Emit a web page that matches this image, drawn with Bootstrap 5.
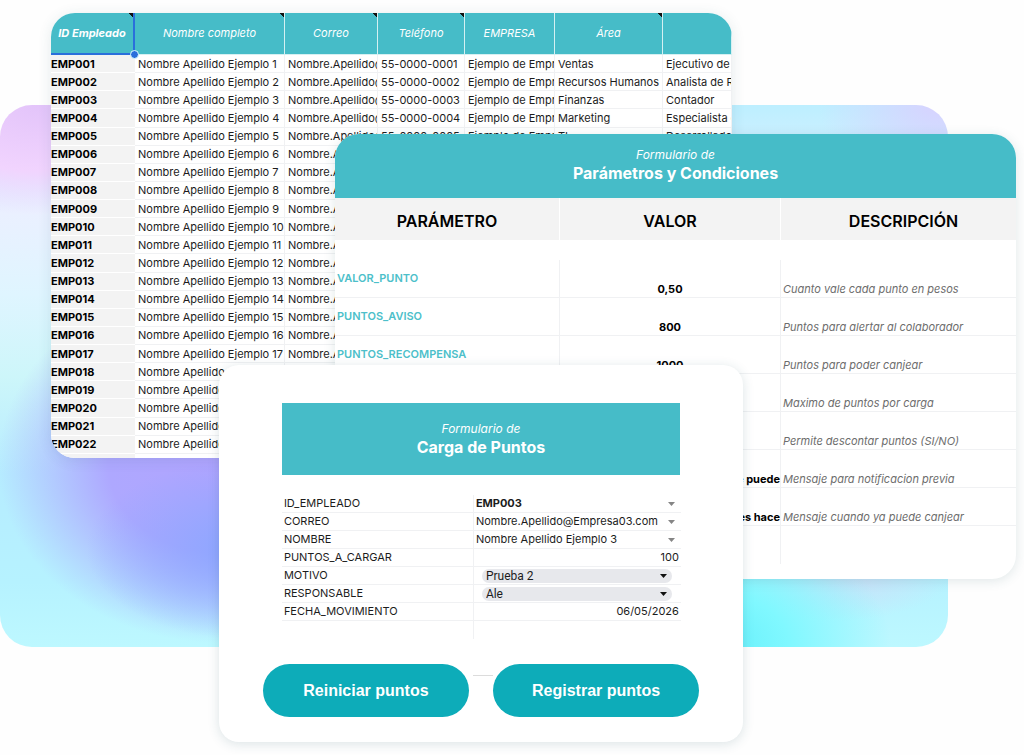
<!DOCTYPE html>
<html lang="es">
<head>
<meta charset="utf-8">
<meta name="viewport" content="width=device-width, initial-scale=1">
<title>Formularios de puntos</title>
<link href="https://cdn.jsdelivr.net/npm/bootstrap@5.3.0/dist/css/bootstrap.min.css" rel="stylesheet">
<style>
:root { --teal: #46bcc8; --teal-dark: #0dacb9; --line: #f0f1f3; }
body { font-family: Inter, "Open Sans", sans-serif; font-size: 11px; color: #1c1c1c; background: #fefefe; overflow-x: hidden; }

/* Overlapping windows share one grid row; the columns mark their edges */
.stage {
  display: grid;
  grid-template-columns: minmax(0,51fr) minmax(0,168fr) minmax(0,116fr) minmax(0,397fr) minmax(0,11fr) minmax(0,205fr) minmax(0,68fr) minmax(0,8fr);
  align-items: start;
  padding-bottom: 12px;
}
.stage > * { grid-row: 1; }
.backdrop {
  grid-column: 1 / 7; margin-top: 105px; height: 542px; border-radius: 32px;
  background:
    radial-gradient(ellipse 170px 130px at 76% 100%, #66f0fb 0, #80f8ff 40%, transparent 100%),
    radial-gradient(ellipse 120px 50px at 88% 86%, #cfdcf6 0, transparent 100%),
    radial-gradient(ellipse 160px 90px at 26% 82%, #8aa6ff 0, transparent 100%),
    radial-gradient(ellipse 220px 180px at 23% 66%, #b0a4ff 0, #aea8ff 50%, transparent 100%),
    radial-gradient(ellipse 190px 110px at 4% 0, #e3c4fa 0, #f1d4fe 60%, transparent 100%),
    radial-gradient(ellipse 120px 80px at 99% 0, #d8d2ff 0, transparent 100%),
    linear-gradient(180deg, #bdefff 0, #eaf0ff 20%, #dff5ff 35%, #cdf6fa 50%, #b6ecff 68%, #b6f2ff 88%, #bdf8ff 100%);
}
.panel { overflow: hidden; background: #fff; }
.panel-sheet { grid-column: 2 / 5; margin-top: 13px; height: 445px; border-radius: 24px; box-shadow: 0 2px 14px rgba(40,90,100,.12); }
.panel-params { grid-column: 4 / 8; margin-top: 134px; padding-bottom: 15px; border-radius: 24px; box-shadow: 0 2px 12px rgba(40,90,100,.14); }
.panel-form { grid-column: 3 / 6; margin-top: 365px; padding: 38px 12% 25px; border-radius: 20px; box-shadow: 0 2px 12px rgba(40,90,100,.16); }

table { table-layout: fixed; width: 100%; border-collapse: separate; border-spacing: 0; }
th, td { padding: 0; overflow: hidden; white-space: nowrap; }

.sheet { height: 441px; }
.sheet thead th { height: 42px; text-align: center; font-weight: 400; font-style: italic; font-size: 11px; color: #fff; background: var(--teal); border-right: 1px solid #d5f0f2; border-bottom: 1px solid #d5f0f2; }
.sheet thead th.noted { background: linear-gradient(225deg, #111 3px, transparent 3px), var(--teal); }
.sheet thead th.picked { position: relative; overflow: visible; font-weight: 700; border-right: 2px solid #2a6fdb; border-bottom: 2px solid #2a6fdb; }
.grip { position: absolute; right: -6px; bottom: -6px; width: 9px; height: 9px; border-radius: 50%; background: #2a6fdb; border: 1px solid #dff; z-index: 1; }
.sheet tbody th { font-weight: 700; color: #000; background: #f3f3f3; border-bottom: 1px solid #fff; line-height: 16px; }
.sheet tbody td { padding-left: 3px; line-height: 16px; border-right: 1px solid var(--line); border-bottom: 1px solid var(--line); }
.sheet-tail { width: 84px; height: 4px; background: #f3f3f3; }

.banner { background: var(--teal); color: #fff; text-align: center; }
.banner p { margin: 0; font-size: 12px; line-height: 18px; font-style: italic; }
.banner h2 { margin: 0; font-size: 16px; line-height: 19px; font-weight: 700; }
.panel-params .banner { height: 64px; padding-top: 12px; }
.panel-form .banner { height: 72px; padding-top: 17px; }

.params thead th { height: 42px; padding-top: 3px; background: #f3f3f3; color: #000; font-size: 16px; font-weight: 600; text-align: center; border-right: 1px solid #fff; }
.params thead th:last-child { padding-left: 10px; border-right: 0; }
.params .spacer td { height: 20px; border: 0; }
.params tbody th, .params tbody td { height: 38px; border-bottom: 1px solid var(--line); border-right: 1px solid var(--line); }
.params tbody th { padding-left: 2px; color: #4dbfca; font-weight: 600; }
.params tbody td:last-child { padding-left: 2px; border-right: 0; color: #6d6d6d; font-style: italic; vertical-align: bottom; }
.params .amount { text-align: center; vertical-align: bottom; font-weight: 700; color: #000; }
.params .message { text-align: right; }
.params tbody tr:last-child > * { border-bottom: 0; }

.entry { margin-top: 20px; }
.entry th, .entry td { height: 18px; border-bottom: 1px solid var(--line); font-weight: 400; line-height: 17px; }
.entry th { padding-left: 2px; border-right: 1px solid var(--line); }
.entry .rest > * { border-bottom: 0; }
.entry input, .entry select { display: block; width: 100%; height: 17px; padding: 0 2px; border: 0; background: transparent; color: #1c1c1c; appearance: none; }
.entry input { text-align: right; }
.entry select { background: url("data:image/svg+xml,%3Csvg xmlns='http://www.w3.org/2000/svg' viewBox='0 0 7 4'%3E%3Cpath d='M0 0h7L3.500 4z' fill='%23858585'/%3E%3C/svg%3E") no-repeat right 6px center / 7px 4px; }
.entry select.chip { width: 190px; max-width: 94%; height: 14px; margin-left: 8px; padding: 0 4px; border-radius: 7px; font-family: Roboto, sans-serif; font-size: 12px; line-height: 14px;
  background: #e7e8ec url("data:image/svg+xml,%3Csvg xmlns='http://www.w3.org/2000/svg' viewBox='0 0 7 4'%3E%3Cpath d='M0 0h7L3.500 4z' fill='%23111'/%3E%3C/svg%3E") no-repeat right 5px center / 7px 4px; }
.actions { margin: 25px -19px 0; }
.actions .btn { flex: 1 1 0; height: 53px; padding: 0; border: 0; border-radius: 27px; background: var(--teal-dark); color: #fff; font: 700 16px/24px "Liberation Sans", Arial, sans-serif; }
.stub { width: 24px; height: 1px; margin-top: 11px; background: linear-gradient(90deg, transparent 4px, #dcdcdc 4px); }
</style>
</head>
<body>
<main class="stage">
  <div class="backdrop"></div>

  <section class="panel panel-sheet">
    <table class="sheet">
      <colgroup><col style="width:84px"><col style="width:150px"><col style="width:93px"><col style="width:87px"><col style="width:90px"><col style="width:108px"><col style="width:69px"></colgroup>
      <thead><tr>
        <th class="noted picked">ID Empleado<span class="grip"></span></th><th class="noted">Nombre completo</th><th class="noted">Correo</th><th class="noted">Teléfono</th><th>EMPRESA</th><th class="noted">Área</th><th></th>
      </tr></thead>
      <tbody id="staff"></tbody>
    </table>
    <div class="sheet-tail"></div>
  </section>

  <section class="panel panel-params">
    <div class="banner"><p>Formulario de</p><h2>Parámetros y Condiciones</h2></div>
    <table class="params">
      <colgroup><col style="width:225px"><col style="width:221px"><col style="width:235px"></colgroup>
      <thead><tr><th>PARÁMETRO</th><th>VALOR</th><th>DESCRIPCIÓN</th></tr></thead>
      <tbody>
        <tr class="spacer"><td colspan="3"></td></tr>
        <tr><th>VALOR_PUNTO</th><td class="amount">0,50</td><td>Cuanto vale cada punto en pesos</td></tr>
        <tr><th>PUNTOS_AVISO</th><td class="amount">800</td><td>Puntos para alertar al colaborador</td></tr>
        <tr><th>PUNTOS_RECOMPENSA</th><td class="amount">1000</td><td>Puntos para poder canjear</td></tr>
        <tr><th></th><td></td><td>Maximo de puntos por carga</td></tr>
        <tr><th></th><td></td><td>Permite descontar puntos (SI/NO)</td></tr>
        <tr><th></th><td class="amount message">e puede</td><td>Mensaje para notificacion previa</td></tr>
        <tr><th></th><td class="amount message">es hace</td><td>Mensaje cuando ya puede canjear</td></tr>
        <tr><th></th><td></td><td></td></tr>
      </tbody>
    </table>
  </section>

  <section class="panel panel-form">
    <div class="banner"><p>Formulario de</p><h2>Carga de Puntos</h2></div>
    <form>
      <table class="entry">
        <colgroup><col style="width:192px"><col style="width:207px"></colgroup>
        <tbody>
          <tr><th><label for="emp">ID_EMPLEADO</label></th><td><select id="emp" class="fw-bold"><option>EMP003</option></select></td></tr>
          <tr><th><label for="mail">CORREO</label></th><td><select id="mail"><option>Nombre.Apellido@Empresa03.com</option></select></td></tr>
          <tr><th><label for="name">NOMBRE</label></th><td><select id="name"><option>Nombre Apellido Ejemplo 3</option></select></td></tr>
          <tr><th><label for="pts">PUNTOS_A_CARGAR</label></th><td><input id="pts" type="text" value="100"></td></tr>
          <tr><th><label for="why">MOTIVO</label></th><td><select id="why" class="chip"><option>Prueba 2</option></select></td></tr>
          <tr><th><label for="who">RESPONSABLE</label></th><td><select id="who" class="chip"><option>Ale</option></select></td></tr>
          <tr><th><label for="day">FECHA_MOVIMIENTO</label></th><td><input id="day" type="text" value="06/05/2026"></td></tr>
          <tr class="rest"><th></th><td></td></tr>
        </tbody>
      </table>
      <div class="actions d-flex">
        <button type="button" class="btn">Reiniciar puntos</button><span class="stub"></span><button type="button" class="btn">Registrar puntos</button>
      </div>
    </form>
  </section>
</main>
<script src="https://cdn.jsdelivr.net/npm/bootstrap@5.3.0/dist/js/bootstrap.bundle.min.js"></script>
<script>
const details = [['Ventas', 'Ejecutivo de Ventas'], ['Recursos Humanos', 'Analista de RH'], ['Finanzas', 'Contador'], ['Marketing', 'Especialista en Marketing'], ['TI', 'Desarrollador']];
let rows = '';
for (let i = 1; i <= 22; i++) {
  const d = details[i - 1];
  const mail = i <= 17 ? 'Nombre.Apellido@Empresa.com' : '';
  rows += `<tr><th>EMP${String(i).padStart(3, '0')}</th><td>Nombre Apellido Ejemplo ${i}</td><td>${mail}</td>` +
    (d ? `<td>55-0000-000${i}</td><td>Ejemplo de Empresa</td><td>${d[0]}</td><td>${d[1]}</td>` : '<td></td><td></td><td></td><td></td>') + '</tr>';
}
document.getElementById('staff').innerHTML = rows;
</script>
</body>
</html>
